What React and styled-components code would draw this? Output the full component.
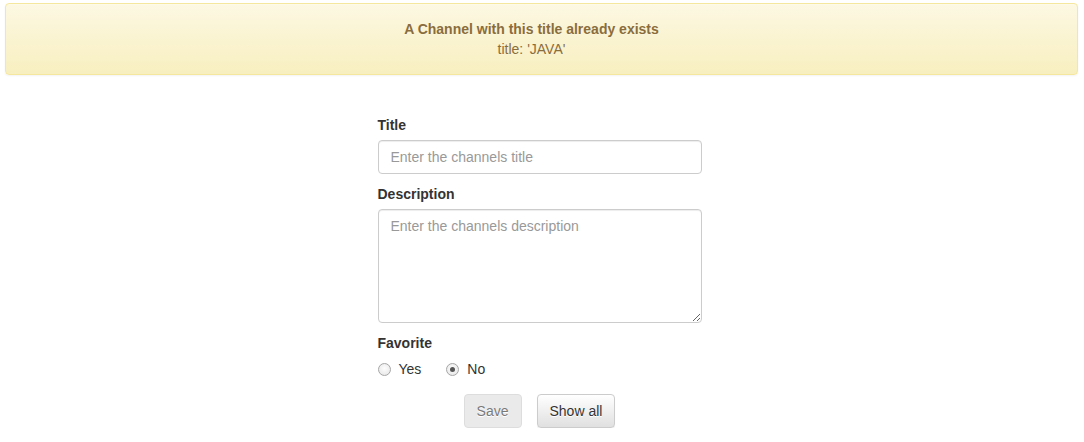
import React from 'react';
import styled, { createGlobalStyle } from 'styled-components';

const GlobalStyle = createGlobalStyle`
	body {
		margin: 0;
		background: #fff;
		font-family: "Liberation Sans", Arial, sans-serif;
		font-size: 14px;
		line-height: 20px;
		color: #333;
	}
	* { box-sizing: border-box; }
`;

const Page = styled.div`
	padding: 3px 6px 0 5px;
`;

const Alert = styled.div`
	padding: 15px 35px 15px 15px;
	border: 1px solid #f5e79e;
	border-radius: 4px;
	background: linear-gradient(to bottom, #fcf8e3 0%, #f8efc0 100%);
	box-shadow: inset 0 1px 0 rgba(255, 255, 255, 0.25), 0 1px 2px rgba(0, 0, 0, 0.05);
	color: #8a6d3b;
	text-align: center;
	text-shadow: 0 1px 0 rgba(255, 255, 255, 0.2);
`;

const AlertTitle = styled.div`
	font-weight: bold;
`;

const Form = styled.form`
	width: 324px;
	margin: 40px auto 0;
	position: relative;
	left: -2px;
`;

const Group = styled.div`
	margin-bottom: ${p => (p.tight ? '0' : '10px')};
`;

const Label = styled.label`
	display: block;
	margin-bottom: ${p => (p.tight ? '6px' : '5px')};
	font-weight: bold;
`;

const fieldStyles = `
	display: block;
	width: 100%;
	padding: 6px 12px;
	font-family: "Liberation Sans", Arial, sans-serif;
	font-size: 14px;
	line-height: 20px;
	color: #555;
	background: #fff;
	border: 1px solid #ccc;
	border-radius: 4px;
	box-shadow: inset 0 1px 1px rgba(0, 0, 0, 0.075);
	outline: none;
	&::placeholder { color: #999; }
`;

const Input = styled.input`
	${fieldStyles}
	height: 34px;
`;

const TextArea = styled.textarea`
	${fieldStyles}
	height: 114px;
	resize: vertical;
`;

const RadioRow = styled.div`
	display: flex;
	gap: 25px;
	height: 20px;
	align-items: center;
`;

const RadioLabel = styled.label`
	display: flex;
	align-items: center;
	gap: 8px;
	cursor: pointer;
`;

const RadioDot = styled.span`
	width: 13px;
	height: 13px;
	border-radius: 50%;
	border: 1px solid #a6a6a6;
	background: radial-gradient(circle at 50% 40%, #fdfdfd 0%, #e4e4e4 100%);
	display: inline-flex;
	align-items: center;
	justify-content: center;
	&::after {
		content: '';
		width: 5px;
		height: 5px;
		border-radius: 50%;
		background: ${p => (p.checked ? '#555' : 'transparent')};
	}
`;

const Actions = styled.div`
	display: flex;
	justify-content: center;
	gap: 15px;
	margin-top: 15px;
`;

const Button = styled.button`
	padding: 6px 12px;
	font-family: "Liberation Sans", Arial, sans-serif;
	font-size: 14px;
	line-height: 20px;
	color: #333;
	border: 1px solid #ccc;
	border-radius: 4px;
	background: linear-gradient(to bottom, #fff 0%, #e0e0e0 100%);
	text-shadow: 0 1px 0 #fff;
	box-shadow: inset 0 1px 0 rgba(255, 255, 255, 0.15), 0 1px 1px rgba(0, 0, 0, 0.075);
	cursor: pointer;
	&:disabled {
		background: #e0e0e0;
		opacity: 0.65;
		box-shadow: none;
		cursor: not-allowed;
	}
`;

const App = () => {
	const [favorite, setFavorite] = React.useState('no');

	return (
		<>
			<GlobalStyle />
			<Page>
				<Alert>
					<AlertTitle>A Channel with this title already exists</AlertTitle>
					<div>title: 'JAVA'</div>
				</Alert>
				<Form onSubmit={e => e.preventDefault()}>
					<Group>
						<Label htmlFor="title">Title</Label>
						<Input id="title" placeholder="Enter the channels title" />
					</Group>
					<Group>
						<Label htmlFor="description">Description</Label>
						<TextArea id="description" placeholder="Enter the channels description" />
					</Group>
					<Group tight>
						<Label tight>Favorite</Label>
						<RadioRow>
							<RadioLabel onClick={() => setFavorite('yes')}>
								<RadioDot checked={favorite === 'yes'} />
								Yes
							</RadioLabel>
							<RadioLabel onClick={() => setFavorite('no')}>
								<RadioDot checked={favorite === 'no'} />
								No
							</RadioLabel>
						</RadioRow>
					</Group>
					<Actions>
						<Button type="submit" disabled>Save</Button>
						<Button type="button">Show all</Button>
					</Actions>
				</Form>
			</Page>
		</>
	);
};

export default App;
